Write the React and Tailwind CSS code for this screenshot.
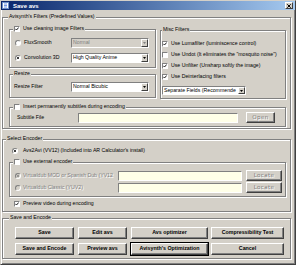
import React from "react";

const Check = ({ checked }) => (
  <span className="flex h-[6px] w-[6px] shrink-0 items-center justify-center border border-[#808080] border-r-white border-b-white bg-white">
    {checked && (
      <svg width="4" height="4" viewBox="0 0 4 4">
        <path d="M0.3 1.8 L1.5 3 L3.7 0.5" fill="none" stroke="#000" strokeWidth="0.9" />
      </svg>
    )}
  </span>
);

const Radio = ({ checked, disabled }) => (
  <span
    className={`flex h-[6px] w-[6px] shrink-0 items-center justify-center rounded-full border border-[#808080] border-r-white border-b-white ${
      disabled ? "bg-[#d4d0c8]" : "bg-white"
    }`}
  >
    {checked && <span className={`h-[2px] w-[2px] rounded-full ${disabled ? "bg-[#808080]" : "bg-black"}`} />}
  </span>
);

const Select = ({ value, className, disabled }) => (
  <div
    className={`flex items-center overflow-hidden border border-[#808080] border-r-white border-b-white ${
      disabled ? "bg-[#d4d0c8] text-[#808080]" : "bg-white text-black"
    } ${className}`}
  >
    <span className="min-w-0 flex-1 overflow-hidden whitespace-nowrap pl-[1px] leading-none">{value}</span>
    <span className="flex h-full w-[7px] shrink-0 items-center justify-center border border-white border-r-[#404040] border-b-[#404040] bg-[#d4d0c8]">
      <svg width="3" height="2" viewBox="0 0 3 2">
        <path d="M0 0h3L1.5 2z" fill={disabled ? "#808080" : "#000"} />
      </svg>
    </span>
  </div>
);

const TextBox = ({ className }) => (
  <div className={`border border-[#808080] border-r-white border-b-white bg-[#ffffe8] ${className}`} />
);

const Button = ({ children, className, def }) => (
  <div
    className={`flex items-center justify-center whitespace-nowrap border border-white border-r-[#404040] border-b-[#404040] bg-[#d4d0c8] text-[5.3px] font-bold leading-none shadow-[inset_-1px_-1px_0_#808080] ${
      def ? "outline outline-black" : ""
    } ${className}`}
  >
    {children}
  </div>
);

const OffButton = ({ children, className }) => (
  <div
    className={`flex items-center justify-center border border-white border-r-[#404040] border-b-[#404040] bg-[#d4d0c8] font-['DejaVu_Sans',sans-serif] text-[5.5px] leading-none tracking-[0.4px] text-[#808080] shadow-[inset_-1px_-1px_0_#808080] [text-shadow:1px_1px_0_#fff] ${className}`}
  >
    {children}
  </div>
);

const Group = ({ label, labelX, className, children }) => (
  <div className={`relative border border-[#808080] shadow-[1px_1px_0_#fff,inset_1px_1px_0_#fff] ${className}`}>
    <div className={`absolute top-[-4px] flex h-[6px] items-center gap-[3px] bg-[#d4d0c8] px-[1px] leading-none ${labelX}`}>
      {label}
    </div>
    {children}
  </div>
);

export default function App() {
  return (
    <div className="h-[265px] w-[296px] border border-[#d4d0c8] border-r-[#404040] border-b-[#404040] bg-[#d4d0c8] font-['Liberation_Sans',Arial,sans-serif] text-[5.2px] text-black shadow-[inset_1px_1px_0_#fff,inset_-1px_-1px_0_#808080]">
      {/* title bar */}
      <div className="flex h-[9px] items-center bg-linear-to-r from-[#0a246a] to-[#a6caf0]">
        <svg width="7" height="7" viewBox="0 0 7 7" className="ml-[1px]">
          <rect x="0.5" y="0.5" width="6" height="6" fill="#fff" stroke="#6d8fc9" />
          <path d="M2 2h3M2 3.5h3M2 5h3" stroke="#3a6ad4" strokeWidth="0.7" />
        </svg>
        <span className="ml-[4px] text-[6px] font-bold leading-none text-white">Save avs</span>
        <div className="ml-auto mr-[2px] flex h-[7px] w-[8px] items-center justify-center border border-white border-r-[#404040] border-b-[#404040] bg-[#d4d0c8]">
          <svg width="4" height="4" viewBox="0 0 4 4">
            <path d="M0.3 0.3L3.7 3.7M3.7 0.3L0.3 3.7" stroke="#000" strokeWidth="1" />
          </svg>
        </div>
      </div>

      <div className="pl-[1px]">
        {/* Avisynth's filters */}
        <Group label="Avisynth's Filters (Predefined Values)" labelX="left-[5px]" className="mt-[7px] h-[112px] w-[289px]">
          <div className="flex items-start gap-[4px] pl-[6px]">
            <div className="mt-[11px] w-[147px]">
              <Group
                label={
                  <>
                    <Check checked />
                    <span>Use cleaning image Filters</span>
                  </>
                }
                labelX="left-[3px]"
                className="h-[39px] w-[147px]"
              >
                <div className="mt-[8px] flex h-[10px] items-center">
                  <span className="ml-[5px] flex items-center gap-[3px] leading-none">
                    <Radio />
                    FluxSmooth
                  </span>
                  <Select value="Normal" disabled className="ml-auto mr-[6px] h-[10px] w-[78px]" />
                </div>
                <div className="mt-[5px] flex h-[10px] items-center">
                  <span className="ml-[5px] flex items-center gap-[3px] leading-none">
                    <Radio checked />
                    Convolution 3D
                  </span>
                  <Select value="High Quality Anime" className="ml-auto mr-[6px] h-[10px] w-[78px]" />
                </div>
              </Group>
              <Group label="Resize" labelX="left-[3px]" className="mt-[6px] h-[24px] w-[147px]">
                <div className="mt-[7px] flex h-[10px] items-center">
                  <span className="ml-[4px] leading-none">Resize Filter</span>
                  <Select value="Normal Bicubic" className="ml-auto mr-[6px] h-[10px] w-[78px]" />
                </div>
              </Group>
            </div>
            <Group label="Misc Filters" labelX="left-[1px]" className="mt-[12px] h-[69px] w-[126px]">
              <div className="pl-[1px] pt-[7px]">
                {[
                  [true, "Use Lumafilter (luminiscence control)"],
                  [false, 'Use Undot (It eliminates the "mosquito noise")'],
                  [true, "Use Unfilter (Unsharp softly the image)"],
                  [true, "Use Deinterlacing filters"],
                ].map(([c, t]) => (
                  <div key={t} className="flex h-[11px] items-center gap-[3px] whitespace-nowrap leading-none">
                    <Check checked={c} />
                    <span>{t}</span>
                  </div>
                ))}
                <Select value="Separate Fields (Recommende" className="mt-[4px] h-[9px] w-[84px]" />
              </div>
            </Group>
          </div>
          <Group
            label={
              <>
                <Check />
                <span>Insert permanently subtitles during encoding</span>
              </>
            }
            labelX="left-[3px]"
            className="ml-[6px] mt-[8px] h-[20px] w-[277px]"
          >
            <div className="mt-[4px] flex h-[11px] items-center">
              <span className="ml-[7px] w-[61px] leading-none">Subtitle File</span>
              <TextBox className="h-[10px] w-[160px]" />
              <OffButton className="ml-[8px] h-[11px] w-[29px]">Open</OffButton>
            </div>
          </Group>
        </Group>

        {/* Select Encoder */}
        <Group label="Select Encoder" labelX="left-[3px]" className="mt-[10px] h-[73px] w-[289px]">
          <div className="ml-[9px] mt-[5px] flex h-[11px] items-center gap-[5px] leading-none">
            <Radio checked />
            <span>Avs2Avi (VV12) (Included into AR Calculator's install)</span>
          </div>
          <Group
            label={
              <>
                <Check />
                <span>Use external encoder</span>
              </>
            }
            labelX="left-[3px]"
            className="ml-[6px] mt-[6px] h-[35px] w-[277px]"
          >
            {["Virtualdub MOD or Spanish Dub (YV12", "Virtualdub Classic (YUV2)"].map((t, i) => (
              <div key={t} className={`flex h-[11px] items-center ${i === 0 ? "mt-[7px]" : "mt-[1px]"}`}>
                <span className="ml-[5px]">
                  <Radio disabled checked={i === 0} />
                </span>
                <span className="ml-[2px] w-[95px] whitespace-nowrap leading-none text-[#808080] [text-shadow:1px_1px_0_#fff]">
                  {t}
                </span>
                <TextBox className="h-[10px] w-[124px]" />
                <OffButton className="ml-[4px] h-[11px] w-[36px]">Locate</OffButton>
              </div>
            ))}
          </Group>
          <div className="ml-[11px] mt-[1px] flex h-[11px] items-center gap-[3px] leading-none">
            <Check checked />
            <span>Preview video during encoding</span>
          </div>
        </Group>

        {/* Save and Encode */}
        <Group label="Save and Encode" labelX="left-[6px]" className="mt-[6px] h-[41px] w-[289px]">
          <div className="ml-[12px] mt-[8px] flex h-[12px]">
            <Button className="w-[59px]">Save</Button>
            <Button className="ml-[4px] w-[49px]">Edit avs</Button>
            <Button className="ml-[4px] w-[77px]">Avs optimizer</Button>
            <Button className="ml-[3px] w-[73px]">Compressibility Test</Button>
          </div>
          <div className="ml-[12px] mt-[4px] flex h-[12px]">
            <Button className="w-[59px]">Save and Encode</Button>
            <Button className="ml-[4px] w-[49px]">Preview avs</Button>
            <Button def className="ml-[4px] w-[77px]">
              Avisynth's Optimization
            </Button>
            <Button className="ml-[3px] w-[73px]">Cancel</Button>
          </div>
        </Group>
      </div>
    </div>
  );
}
